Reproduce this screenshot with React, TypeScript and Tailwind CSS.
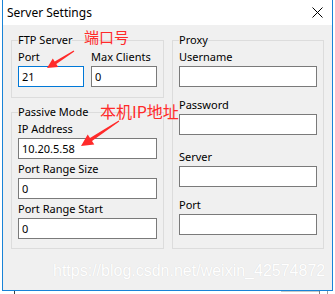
/**
 * App.tsx — "Server Settings" dialog (Windows style) with red annotations.
 */

const ui = "font-['Noto_Sans','Liberation_Sans',sans-serif]";

function Field({
  label,
  value = '',
  focused = false,
  className = '',
}: {
  label: string;
  value?: string;
  focused?: boolean;
  className?: string;
}) {
  return (
    <div className={`flex flex-col ${className}`}>
      <span className="h-[18px] text-[11px] leading-[18px] text-black">{label}</span>
      <input
        readOnly
        value={value}
        className={`h-[21px] w-full border bg-white px-[3px] text-[11px] text-black outline-none ${
          focused ? 'border-[#0078d7]' : 'border-[#7a7a7a]'
        }`}
      />
    </div>
  );
}

function Group({ title, className = '', children }: { title: string; className?: string; children: React.ReactNode }) {
  return (
    <fieldset className={`border border-[#dcdcdc] px-[6px] ${className}`}>
      <legend className="h-[16px] text-[11px] leading-[16px] text-black">{title}</legend>
      {children}
    </fieldset>
  );
}

export default function App() {
  return (
    <div className={`relative h-[294px] w-[335px] overflow-hidden bg-white ${ui}`}>
      {/* Dialog window */}
      <div className="ml-[2px] flex h-[291px] w-[331px] flex-col border-x border-b border-[#1883d7]">
        {/* Title bar */}
        <div className="flex h-[25px] items-center justify-between bg-white pl-[4px] pr-[9px]">
          <span className="text-[12px] leading-none text-black">Server Settings</span>
          <svg width="11" height="11" viewBox="0 0 11 11" className="text-black">
            <path d="M0.5 0.5 L10.5 10.5 M10.5 0.5 L0.5 10.5" stroke="currentColor" strokeWidth="1" />
          </svg>
        </div>

        {/* Body */}
        <div className="flex flex-1 gap-[8px] bg-[#f0f0f0] px-[8px] pt-[8px]">
          {/* Left column */}
          <div className="flex w-[153px] flex-col gap-[6px]">
            <Group title="FTP Server" className="-mt-px pb-[10px]">
              <div className="flex gap-[7px]">
                <Field label="Port" value="21" focused className="w-[66px]" />
                <Field label="Max Clients" value="0" className="w-[66px]" />
              </div>
            </Group>
            <Group title="Passive Mode" className="pb-[9px]">
              <Field label="IP Address" value="10.20.5.58" />
              <Field label="Port Range Size" value="0" className="mt-px" />
              <Field label="Port Range Start" value="0" className="mt-px" />
            </Group>
          </div>

          {/* Right column */}
          <div className="flex w-[152px] flex-col">
            <Group title="Proxy" className="-mt-px pb-[13px]">
              <Field label="Username" />
              <Field label="Password" className="mt-[9px]" />
              <Field label="Server" className="mt-[13px]" />
              <Field label="Port" className="mt-[9px]" />
            </Group>
          </div>
        </div>
      </div>

      {/* Window behind, peeking out at the bottom */}
      <div className="flex h-[3px] items-stretch">
        <div className="ml-[14px] w-px bg-[#404040]" />
        <div className="ml-[266px] w-[38px] border-t border-[#c8c8c8]" />
        <div className="w-px bg-[#808080]" />
        <div className="ml-[7px] w-px bg-[#a0a0a0]" />
      </div>

      {/* Annotations */}
      <span className="absolute left-[84px] top-[28px] font-['Noto_Sans_CJK_SC',sans-serif] text-[15px] leading-[18px] text-[#ff2a2a]">
        端口号
      </span>
      <span className="absolute left-[100px] top-[102px] font-['Noto_Sans_CJK_SC',sans-serif] text-[16px] leading-[19px] text-[#ff2a2a]">
        本机IP地址
      </span>
      <svg className="pointer-events-none absolute left-0 top-0" width="335" height="294" viewBox="0 0 335 294">
        <polygon
          fill="#ff2a2a"
          points="73.7,50.6 54.7,61.4 52.8,58.5 47,68 58.2,66.9 56.3,64 74.3,51.4"
        />
        <polygon
          fill="#ff2a2a"
          points="118.7,120.5 90,137.9 87.7,134.4 81,146 94.3,144.4 92,140.9 119.3,121.5"
        />
      </svg>

      {/* Watermark */}
      <span className="absolute left-[53px] top-[261px] font-['Liberation_Sans',sans-serif] text-[16px] leading-[20px] text-white [text-shadow:0_0_1px_rgba(0,0,0,0.12)]">
        https://blog.csdn.net/weixin_42574872
      </span>
    </div>
  );
}
